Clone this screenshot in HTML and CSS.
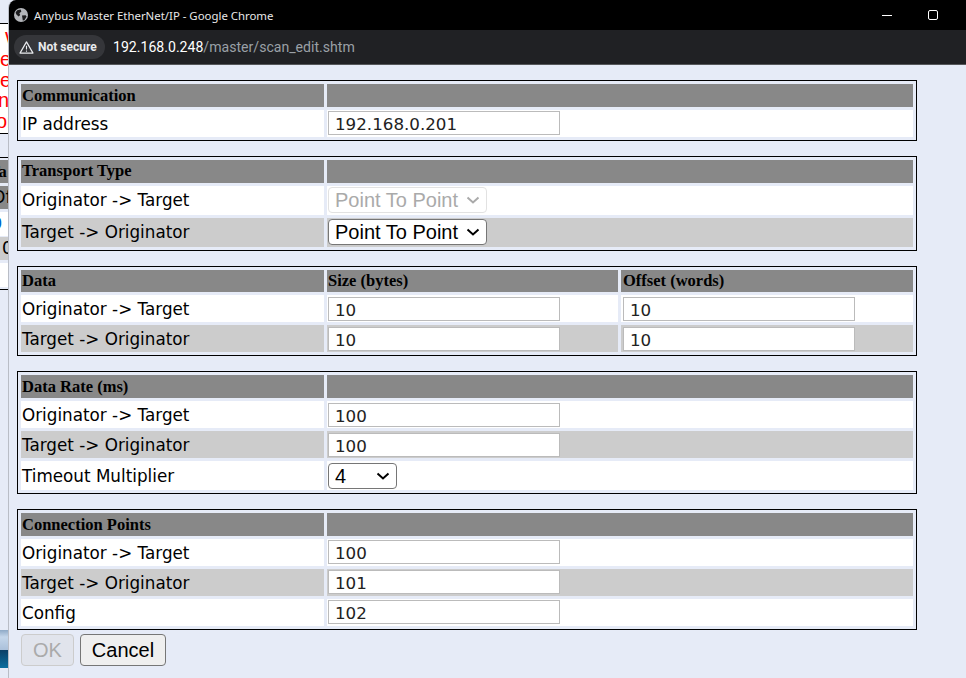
FILE: index.html
```html
<!DOCTYPE html>
<html lang="en">
<head>
<meta charset="utf-8">
<title>Anybus Master EtherNet/IP</title>
<link rel="stylesheet" href="styles.css">
</head>
<body>
<div class="backdrop">
  <div class="bd-top"></div>
  <div class="bd-notice">
    <div class="n1">W</div>
    <div class="n2">e</div>
    <div class="n3">ea</div>
    <div class="n4">n</div>
    <div class="n5">or</div>
  </div>
  <div class="bd-gap"></div>
  <div class="bd-list">
    <div class="bd-h">Ta</div>
    <div class="bd-h2">Of</div>
    <div class="bd-w"><span class="blue">0</span></div>
    <div class="bd-g">0</div>
    <div class="bd-w2"></div>
  </div>
  <div class="bd-fill"></div>
  <div class="bd-wall1"></div>
  <div class="bd-wall2"></div>
</div>

<div class="window">
  <header class="titlebar">
    <svg class="globe" viewBox="0 0 14 14" width="14" height="14" aria-hidden="true">
      <circle cx="7" cy="7" r="7" fill="#b4b6ba"/>
      <path d="M3.2 2.2 6.6 1.4 7.4 3.6 5.4 5.2 6.2 7 4.6 8.4 2.4 6.4 1.6 4.6Z" fill="#1c1c1e"/>
      <path d="M8 7.6 11.6 7.2 12.6 8.6 10.4 12.2 8.8 12.6 8.4 10Z" fill="#1c1c1e"/>
    </svg>
    <span class="title">Anybus Master EtherNet/IP - Google Chrome</span>
    <div class="controls">
      <span class="min"></span>
      <span class="max"></span>
    </div>
  </header>
  <div class="addressbar">
    <div class="pill">
      <svg viewBox="0 0 16 14" width="15" height="13" aria-hidden="true">
        <path d="M8 1 15 13H1Z" fill="none" stroke="#e8eaed" stroke-width="1.3" stroke-linejoin="round"/>
        <path d="M8 5v4.2M8 10.2v1.3" stroke="#e8eaed" stroke-width="1.2"/>
      </svg>
      <span>Not secure</span>
    </div>
    <div class="url"><span class="host">192.168.0.248</span>/master/scan_edit.shtm</div>
  </div>

  <main class="content">
    <table class="group raised">
      <colgroup><col class="c1"><col class="c2"><col class="c3"></colgroup>
      <tr class="head"><th>Communication</th><th colspan="2"></th></tr>
      <tr class="row"><td>IP address</td><td colspan="2"><input class="field" value="192.168.0.201"></td></tr>
    </table>

    <table class="group transport">
      <colgroup><col class="c1"><col class="c2"><col class="c3"></colgroup>
      <tr class="head"><th>Transport Type</th><th colspan="2"></th></tr>
      <tr class="row tall"><td>Originator -&gt; Target</td><td colspan="2"><select class="choice wide" disabled><option>Point To Point</option></select></td></tr>
      <tr class="row tall alt"><td>Target -&gt; Originator</td><td colspan="2"><select class="choice wide"><option>Point To Point</option></select></td></tr>
    </table>

    <table class="group">
      <colgroup><col class="c1"><col class="c2"><col class="c3"></colgroup>
      <tr class="head short"><th>Data</th><th>Size (bytes)</th><th class="offset-head">Offset (words)</th></tr>
      <tr class="row"><td>Originator -&gt; Target</td><td><input class="field" value="10"></td><td class="offset"><input class="field" value="10"></td></tr>
      <tr class="row alt"><td>Target -&gt; Originator</td><td><input class="field" value="10"></td><td class="offset"><input class="field" value="10"></td></tr>
    </table>

    <table class="group">
      <colgroup><col class="c1"><col class="c2"><col class="c3"></colgroup>
      <tr class="head"><th>Data Rate (ms)</th><th colspan="2"></th></tr>
      <tr class="row"><td>Originator -&gt; Target</td><td colspan="2"><input class="field" value="100"></td></tr>
      <tr class="row alt"><td>Target -&gt; Originator</td><td colspan="2"><input class="field" value="100"></td></tr>
      <tr class="row tall"><td>Timeout Multiplier</td><td colspan="2"><select class="choice narrow"><option>4</option></select></td></tr>
    </table>

    <table class="group raised">
      <colgroup><col class="c1"><col class="c2"><col class="c3"></colgroup>
      <tr class="head"><th>Connection Points</th><th colspan="2"></th></tr>
      <tr class="row"><td>Originator -&gt; Target</td><td colspan="2"><input class="field" value="100"></td></tr>
      <tr class="row alt"><td>Target -&gt; Originator</td><td colspan="2"><input class="field" value="101"></td></tr>
      <tr class="row"><td>Config</td><td colspan="2"><input class="field" value="102"></td></tr>
    </table>

    <div class="actions">
      <button class="btn ok" disabled>OK</button>
      <button class="btn cancel">Cancel</button>
    </div>
  </main>
</div>
</body>
</html>
```

FILE: styles.css
```css
* { box-sizing: border-box; }

html, body {
  margin: 0;
  height: 100%;
}

body {
  position: relative;
  overflow: hidden;
  background: #e6ebf7;
  font-family: "DejaVu Sans", sans-serif;
}

/* Page behind the popup window */
.backdrop {
  position: absolute;
  left: 0;
  top: 0;
  bottom: 0;
  width: 10px;
  display: flex;
  flex-direction: column;
  background: #e6ebf7;
  overflow: hidden;
}

.bd-top { height: 24px; flex: none; border-bottom: 1px solid #000; }

.bd-notice {
  height: 110px;
  flex: none;
  background: #fff;
  border-bottom: 1px solid #000;
  color: #f00;
  font: 20px/20.4px "Liberation Sans", sans-serif;
  padding-top: 5px;
  white-space: nowrap;
}

.n1 { padding-left: 5px; }
.n4 { margin-left: -2px; }
.n5 { margin-left: -4px; }

.bd-gap { height: 23px; flex: none; }

.bd-list {
  height: 133px;
  flex: none;
  border-top: 1px solid #000;
  border-bottom: 1px solid #000;
  white-space: nowrap;
  overflow: hidden;
}

.bd-h {
  height: 23px;
  margin-top: 2px;
  margin-left: -11px;
  background: #888;
  font: bold 16.5px/23px "Liberation Serif", serif;
}

.bd-h2 {
  height: 23px;
  margin-top: 3px;
  margin-left: -8px;
  background: #888;
  font: 17px/23px "DejaVu Sans", sans-serif;
}

.bd-w { height: 24px; margin-top: 3px; background: #fff; font: 16px/24px "DejaVu Sans", sans-serif; margin-left: -8px; }
.blue { color: #06c; }
.bd-g { height: 23px; margin-top: 1px; background: #ccc; font: 17px/23px "DejaVu Sans", sans-serif; padding-left: 2px; }
.bd-w2 { height: 24px; margin-top: 3px; background: #fff; }

.bd-fill { height: 340px; flex: none; }
.bd-wall1 { height: 20px; flex: none; background: linear-gradient(#8fa9c6, #c4d6ea 35%, #aac0da); }
.bd-wall2 { height: 18px; flex: none; background: linear-gradient(#0b3f66, #0a6e9f); }

/* Popup window */
.window {
  position: absolute;
  left: 8px;
  top: 0;
  right: 0;
  bottom: 0;
  display: flex;
  flex-direction: column;
  background: #e6ebf7;
  border-left: 1px solid #b9bdc6;
  border-top-left-radius: 8px;
  overflow: hidden;
}

.titlebar {
  height: 30px;
  flex: none;
  display: flex;
  align-items: center;
  padding-left: 5px;
  background: #000;
  color: #e8e8e8;
}

.globe { flex: none; }

.title {
  margin-left: 6px;
  font: 11.4px "Noto Sans", sans-serif;
  white-space: nowrap;
}

.controls {
  margin-left: auto;
  display: flex;
  align-items: center;
  padding-right: 28px;
  gap: 36px;
}

.min { width: 10px; height: 1px; background: #fff; }
.max { width: 10px; height: 10px; border: 1px solid #fff; border-radius: 2px; }

.addressbar {
  height: 35px;
  flex: none;
  display: flex;
  align-items: center;
  padding-left: 5px;
  background: #202124;
  border-bottom: 1px solid #55575a;
}

.pill {
  width: 91px;
  height: 24px;
  flex: none;
  display: flex;
  align-items: center;
  gap: 4px;
  padding-left: 5px;
  border-radius: 12px;
  background: #35363a;
  color: #e8eaed;
  font: bold 12px "Roboto", sans-serif;
}

.url {
  margin-left: 8px;
  color: #9aa0a6;
  font: 14.1px "Roboto", sans-serif;
  white-space: nowrap;
}

.host { color: #fff; }

.content {
  flex: 1;
  padding: 15px 0 0 8px;
}

.group {
  width: 900px;
  table-layout: fixed;
  border-collapse: separate;
  border-spacing: 3px;
  border: 1px solid #000;
  margin-bottom: 15px;
}

.group:nth-last-of-type(1) { margin-bottom: 0; }

.c1 { width: 303px; }
.c2 { width: 291px; }

th, td { padding: 0 1px; }

th {
  background: #888;
  color: #000;
  text-align: left;
  font: bold 16.5px "Liberation Serif", serif;
}

.offset-head { padding-left: 2px; }

td { font-size: 16.8px; color: #000; background: #fff; padding-top: 1px; }

.head { height: 23px; }
.head.short { height: 22px; }
.row { height: 27px; }
.row.tall { height: 29px; }
.row.alt td { background: #ccc; }

.transport th { padding-bottom: 1px; }
.transport td { padding-top: 0; padding-bottom: 1px; }
.transport .choice { margin-bottom: 0; }

.field {
  display: block;
  width: 232px;
  height: 24px;
  margin: 0;
  padding: 2px 6px 0;
  border: 1px solid #bbb;
  background: #fff;
  color: #222;
  font: 16.7px "DejaVu Sans", sans-serif;
  outline: none;
}

.raised .field { margin-bottom: 2px; }

.offset { padding-left: 2px; }

.choice {
  display: block;
  height: 26px;
  margin: 0 0 1px;
  padding: 0 0 0 6px;
  appearance: none;
  font: 20px "Liberation Sans", sans-serif;
  color: #000;
  border: 1px solid #767676;
  border-radius: 4px;
  background: #fff url("data:image/svg+xml,%3Csvg xmlns='http://www.w3.org/2000/svg' width='14' height='8'%3E%3Cpath d='M1.5 1.5 7 6.5l5.5-5' fill='none' stroke='%23000' stroke-width='2'/%3E%3C/svg%3E") no-repeat right 6px center;
}

.choice:disabled {
  opacity: 1;
  color: #aaa;
  border-color: #e2e2e2;
  background: #fff url("data:image/svg+xml,%3Csvg xmlns='http://www.w3.org/2000/svg' width='14' height='8'%3E%3Cpath d='M1.5 1.5 7 6.5l5.5-5' fill='none' stroke='%23aaa' stroke-width='2'/%3E%3C/svg%3E") no-repeat right 6px center;
}

.wide { width: 159px; }
.narrow { width: 69px; }

.actions {
  display: flex;
  gap: 6px;
  margin: 4px 0 0 4px;
}

.btn {
  height: 32px;
  padding: 0;
  border-radius: 4px;
  font: 20px "Liberation Sans", sans-serif;
}

.ok {
  width: 53px;
  background: #e1e4ec;
  border: 1px solid #ccc;
  color: #aaa;
}

.cancel {
  width: 86px;
  background: #efefef;
  border: 1px solid #767676;
  color: #000;
}
```
